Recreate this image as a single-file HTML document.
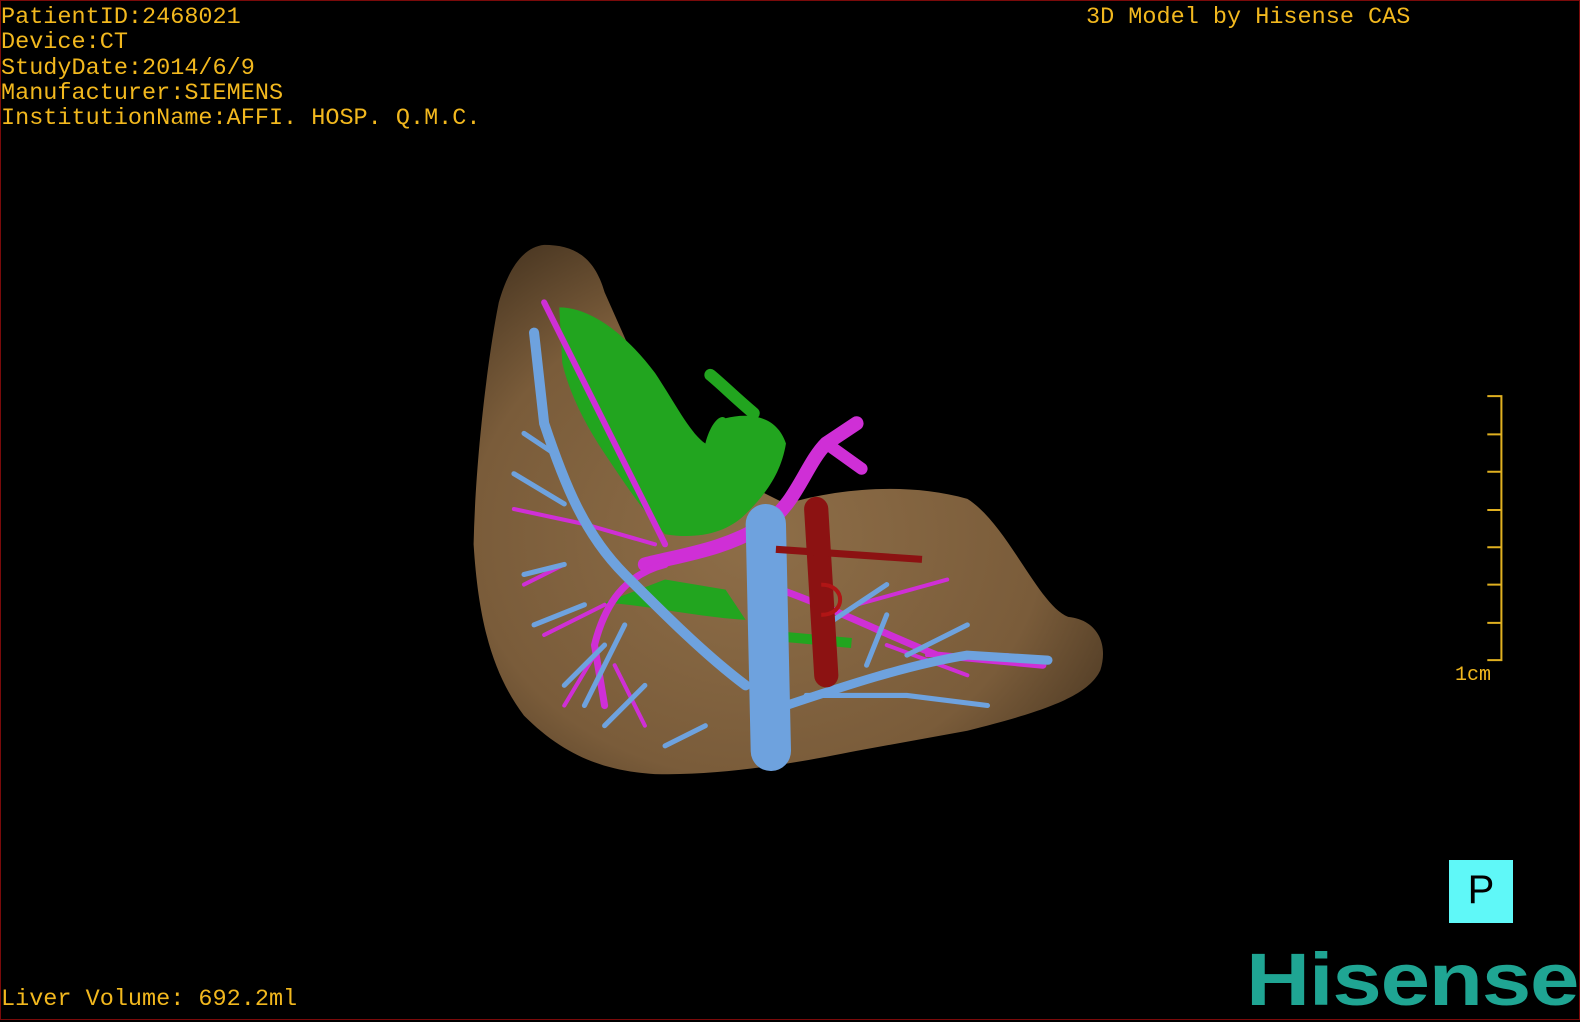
<!DOCTYPE html>
<html><head><meta charset="utf-8"><style>
html,body{margin:0;padding:0;background:#000;}
body{width:1580px;height:1020px;position:relative;overflow:hidden;}
.frame{position:absolute;left:0;top:0;width:1578px;height:1018px;border:1px solid #7a0a0a;}
.t{position:absolute;font-family:"Liberation Mono",monospace;font-size:23.5px;color:#f2b81e;white-space:pre;line-height:25.3px;}
svg{position:absolute;left:0;top:0;}
.logo{position:absolute;left:1246px;top:937px;font-family:"Liberation Sans",sans-serif;font-weight:bold;font-size:74px;color:#1fa593;letter-spacing:-1px;transform:scaleX(1.2);transform-origin:left top;}
.pbox{position:absolute;left:1449px;top:860px;width:64px;height:63px;background:#5ff8f8;color:#000;font-family:"Liberation Sans",sans-serif;font-size:40px;text-align:center;line-height:60px;}
</style></head><body>
<svg width="1580" height="1020" viewBox="0 0 1568 1012" preserveAspectRatio="none">
<defs>
<radialGradient id="lv" cx="0.45" cy="0.55" r="0.65">
<stop offset="0" stop-color="#8e6e48"/><stop offset="0.7" stop-color="#7a5c3a"/><stop offset="1" stop-color="#4e3a24"/></radialGradient>
</defs>
<path d="M540,243 C570,243 590,255 600,290 L640,380 700,460 780,500 C830,485 900,478 960,495 C1000,520 1030,600 1060,612 C1090,615 1100,640 1092,665 C1080,690 1040,705 960,725 L850,745 C800,755 720,770 650,768 C600,765 560,750 520,710 C490,670 475,620 470,540 C472,450 485,350 495,300 C505,265 520,245 540,243Z" fill="url(#lv)"/>
<path d="M555,305 C585,305 620,330 650,370 C670,400 685,430 700,440 C705,420 715,410 720,415 C740,410 770,410 780,440 C775,470 760,490 740,510 C720,530 690,535 660,530 C640,510 620,480 600,450 C580,420 565,390 558,360Z" fill="#22a51f"/>
<path d="M705,372 C715,380 730,395 748,410" stroke="#22a51f" stroke-width="12" fill="none" stroke-linecap="round"/>
<path d="M600,598 C640,600 690,612 740,615 L720,585 660,575Z" fill="#22a51f"/>
<path d="M780,632 L845,638" stroke="#22a51f" stroke-width="10"/>
<g stroke="#cf2fd6" fill="none" stroke-linecap="round">
<path d="M640,560 C680,550 720,545 760,520 C790,500 800,460 820,440 L850,420" stroke-width="14"/>
<path d="M820,440 L855,465" stroke-width="12"/>
<path d="M540,300 C570,360 600,420 630,480 L660,540" stroke-width="6"/>
<path d="M660,560 C620,570 600,600 590,640 L600,700" stroke-width="7"/>
<path d="M760,580 C820,600 880,630 930,650 L1035,660" stroke-width="7"/>
<path d="M650,540 L580,520 510,505" stroke-width="4"/>
<path d="M600,600 L540,630 M590,650 L560,700 M610,660 L640,720 M560,560 L520,580" stroke-width="4"/>
<path d="M850,600 L940,575 M880,640 L960,670 M920,650 L1000,650" stroke-width="4"/>
</g>
<g stroke="#6ea2de" fill="none" stroke-linecap="round">
<path d="M760,520 L765,745" stroke-width="40"/>
<path d="M740,680 C700,650 660,610 620,570 C580,530 560,480 540,420 L530,330" stroke-width="10"/>
<path d="M560,560 L520,570 M580,600 L530,620 M600,640 L560,680 M640,680 L600,720 M620,620 L580,700 M560,500 L510,470 M550,450 L520,430" stroke-width="5"/>
<path d="M780,700 C840,680 900,660 960,650 L1040,655" stroke-width="9"/>
<path d="M800,690 L900,690 980,700 M860,660 L880,610 M900,650 L960,620 M820,620 L880,580 M700,720 L660,740" stroke-width="5"/>
</g>
<path d="M810,505 L820,670" stroke="#8c1212" stroke-width="24" stroke-linecap="round"/>
<path d="M770,545 L915,555" stroke="#8c1212" stroke-width="7"/>
<path d="M815,580 C840,580 840,610 815,610" stroke="#b01515" stroke-width="4" fill="none"/>
<g stroke="#e0b020" stroke-width="2" fill="none">
<path d="M1476,393 H1490 V655 H1476"/>
<path d="M1476,431 H1490 M1476,468 H1490 M1476,506 H1490 M1476,543 H1490 M1476,580 H1490 M1476,618 H1490"/>
</g>
</svg>
<div class="frame"></div>
<div class="t" style="left:1px;top:5px">PatientID:2468021
Device:CT
StudyDate:2014/6/9
Manufacturer:SIEMENS
InstitutionName:AFFI. HOSP. Q.M.C.</div>
<div class="t" style="left:1086px;top:5px">3D Model by Hisense CAS</div>
<div class="t" style="left:1455px;top:663px;font-size:20px">1cm</div>
<div class="t" style="left:1px;top:987px">Liver Volume: 692.2ml</div>
<div class="pbox">P</div>
<div class="logo">Hisense</div>
</body></html>
